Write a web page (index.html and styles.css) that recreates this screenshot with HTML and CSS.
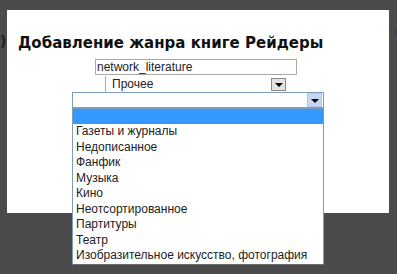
FILE: index.html
```html
<!DOCTYPE html>
<html lang="ru">
<head>
    <meta charset="UTF-8">
    <title>Добавление жанра</title>
    <link rel="stylesheet" href="styles.css">
</head>
<body>
    <div class="page-behind">
        <span class="behind-paren">)</span>
        <span class="behind-mark"></span>
    </div>

    <div class="modal">
        <h2 class="modal-title">Добавление жанра книге Рейдеры</h2>

        <div class="form">
            <div class="text-field">network_literature</div>

            <div class="combo combo-closed">
                <span class="combo-value">Прочее</span>
                <span class="combo-button"><span class="arrow"></span></span>
            </div>

            <div class="combo combo-open">
                <span class="combo-value"></span>
                <span class="combo-button"><span class="arrow"></span></span>

                <ul class="combo-list">
                    <li class="selected">&nbsp;</li>
                    <li>Газеты и журналы</li>
                    <li>Недописанное</li>
                    <li>Фанфик</li>
                    <li>Музыка</li>
                    <li>Кино</li>
                    <li>Неотсортированное</li>
                    <li>Партитуры</li>
                    <li>Театр</li>
                    <li>Изобразительное искусство, фотография</li>
                </ul>
            </div>
        </div>
    </div>
</body>
</html>
```

FILE: styles.css
```css
* {
    margin: 0;
    padding: 0;
    box-sizing: border-box;
}

body {
    background: #4b4b4b;
    font-family: 'Liberation Sans', Arial, sans-serif;
    height: 274px;
    overflow: hidden;
    padding-top: 10px;
}

/* page under the dark overlay */
.page-behind {
    position: absolute;
    left: 0;
    top: 0;
    width: 397px;
    height: 274px;
}

.behind-paren {
    position: absolute;
    left: 0;
    top: 33px;
    font: bold 14px 'DejaVu Sans', sans-serif;
    color: #1e1e1e;
}

.behind-mark {
    position: absolute;
    left: 395px;
    top: 30px;
    width: 2px;
    height: 6px;
    background: #2c4a66;
}

.modal {
    position: relative;
    margin-left: 7px;
    width: 382px;
    height: 203px;
    background: #fff;
    padding-top: 23px;
}

.modal-title {
    font-family: 'DejaVu Sans', Verdana, sans-serif;
    font-size: 15px;
    font-weight: bold;
    color: #111;
    line-height: 20px;
    padding-left: 11px;
    margin-bottom: 6px;
}

.form {
    display: flex;
    flex-direction: column;
    align-items: flex-start;
    font-size: 12px;
    color: #222;
}

.text-field {
    margin-left: 88px;
    width: 202px;
    height: 16px;
    border: 1px solid #a9a9a9;
    line-height: 14px;
    padding-left: 1px;
}

.combo {
    position: relative;
    display: flex;
    align-items: center;
    justify-content: space-between;
    height: 16px;
}

.combo-closed {
    margin-top: 1px;
    margin-left: 98px;
    width: 182px;
    border-left: 1px solid #a9a9a9;
    padding: 0 1px 0 6px;
}

.combo-open {
    margin-left: 65px;
    width: 252px;
    border: 1px solid #7f9db9;
    padding-right: 1px;
}

.combo-value {
    line-height: 14px;
}

.combo-button {
    display: flex;
    align-items: center;
    justify-content: center;
    width: 15px;
    height: 13px;
}

.combo-closed .combo-button {
    background: #e3e3e3;
    border: 1px solid #8a8a8a;
}

.combo-open .combo-button {
    background: #c6d7f5;
    border: 1px solid #b6c9ec;
    height: 14px;
}

.arrow {
    width: 0;
    height: 0;
    border-left: 4px solid transparent;
    border-right: 4px solid transparent;
    border-top: 4px solid #000;
    margin-top: 2px;
}

.combo-list {
    position: absolute;
    left: -1px;
    top: 15px;
    width: 252px;
    list-style: none;
    background: #fff;
    border: 1px solid #7f9db9;
    border-bottom-color: #6d6d6d;
}

.combo-list li {
    height: 15.5px;
    line-height: 15.5px;
    padding-left: 3px;
    white-space: nowrap;
}

.combo-list .selected {
    background: #3399ff;
    height: 15px;
}
```
